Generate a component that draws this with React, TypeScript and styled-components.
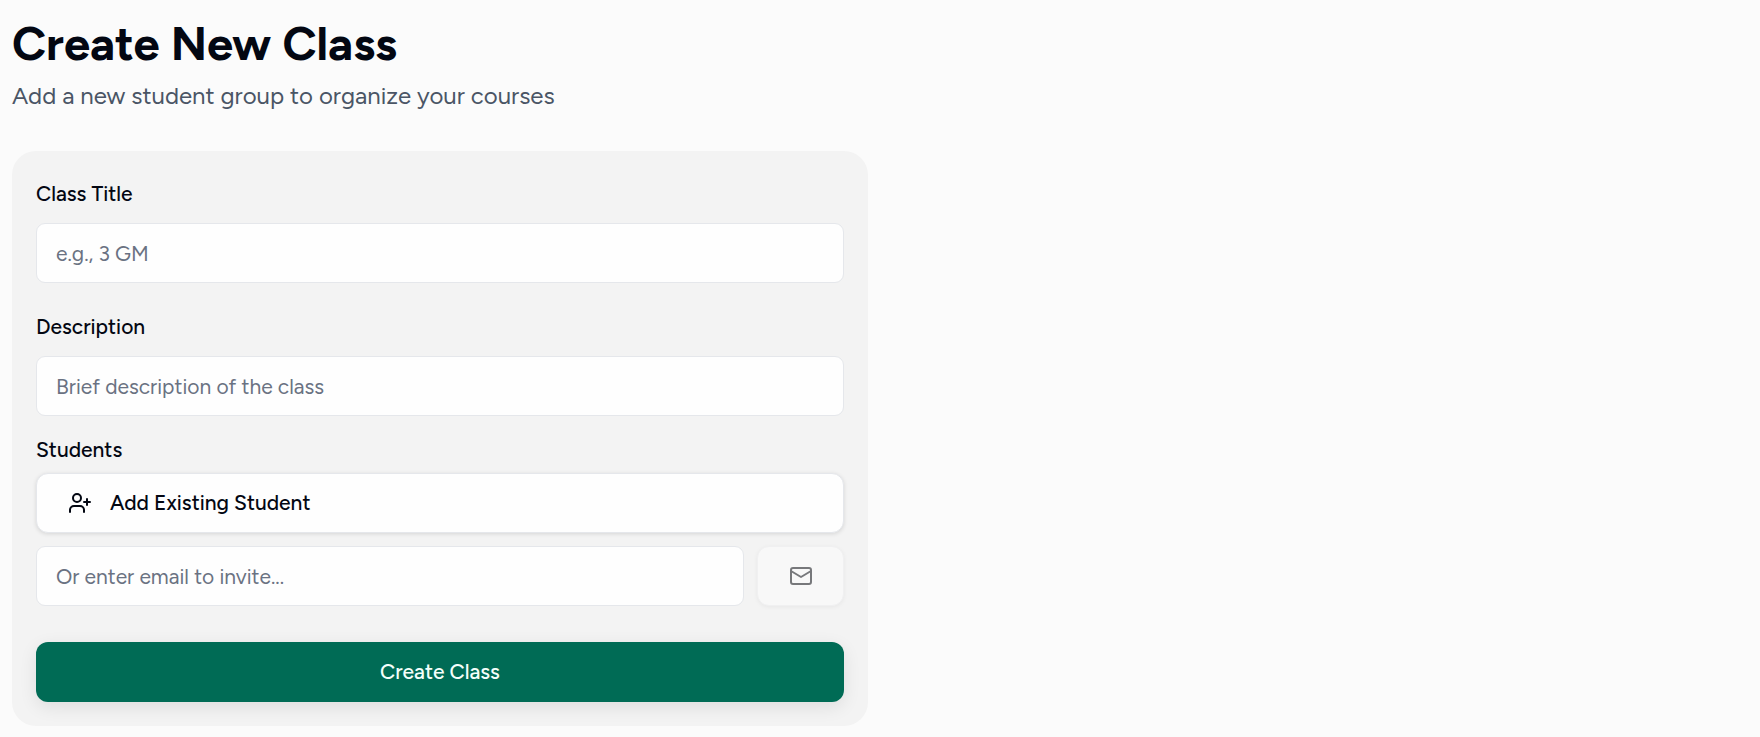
import React from "react";
import styled, { createGlobalStyle } from "styled-components";
import { UserPlus } from "lucide-react";

const GlobalStyle = createGlobalStyle`
  *, *::before, *::after {
    box-sizing: border-box;
  }
  body {
    margin: 0;
    background: #fbfbfb;
    color: #030712;
    font-family: Figtree, Lato, "Liberation Sans", sans-serif;
  }
  button, input {
    font: inherit;
    color: inherit;
  }
`;

const Page = styled.main`
  padding: 12px 12px 11px;
`;

const Title = styled.h1`
  margin: 0;
  font-size: 47px;
  font-weight: 700;
  line-height: 63px;
`;

const Subtitle = styled.p`
  margin: 0 0 35px;
  font-size: 24px;
  line-height: 41px;
  color: #4a5565;
`;

const Card = styled.form`
  max-width: 856px;
  padding: 24px;
  border-radius: 24px;
  background: #f3f3f3;
`;

const Field = styled.div`
  display: flex;
  flex-direction: column;
  gap: 10px;
  margin-bottom: 25px;
`;

const Label = styled.label`
  font-size: 21px;
  font-weight: 500;
  line-height: 38px;
`;

const Group = styled.fieldset`
  margin: -9px 0 36px;
  padding: 0;
  border: 0;
  min-width: 0;
`;

const Legend = styled.legend`
  padding: 0 0 5px;
  font-size: 21px;
  font-weight: 500;
  line-height: 36px;
`;

const TextInput = styled.input`
  width: 100%;
  min-width: 0;
  height: 60px;
  padding: 0 19px;
  border: 1px solid #e5e7eb;
  border-radius: 9px;
  background: #fefefe;
  font-size: 21px;
  &::placeholder {
    color: #6a7282;
    opacity: 1;
  }
`;

const Button = styled.button`
  display: flex;
  align-items: center;
  justify-content: center;
  height: 60px;
  border: 0;
  border-radius: 12px;
  font-size: 21px;
  font-weight: 500;
  cursor: pointer;
`;

const ButtonText = styled.span`
  padding-bottom: 2px;
`;

const AddButton = styled(Button)`
  justify-content: flex-start;
  gap: 18px;
  width: 100%;
  margin-bottom: 13px;
  padding: 0 31px;
  border: 1px solid #e5e7eb;
  background: #fefefe;
  box-shadow: 0 1px 4px rgba(0, 0, 0, 0.12);
`;

const InviteRow = styled.div`
  display: flex;
  gap: 13px;
`;

const InviteButton = styled(Button)`
  flex: 0 0 87px;
  border: 1px solid #f0f0f1;
  background: #f8f8f8;
  color: #77787b;
  box-shadow: 0 1px 4px rgba(0, 0, 0, 0.05);
`;

const SubmitButton = styled(Button)`
  width: 100%;
  background: #006b55;
  color: #f4fffb;
  box-shadow: 0 5px 18px rgba(0, 0, 0, 0.09);
`;

function MailIcon() {
  return (
    <svg
      width="24"
      height="24"
      viewBox="0 0 24 24"
      fill="none"
      stroke="currentColor"
      strokeWidth="2"
      strokeLinecap="round"
      strokeLinejoin="round"
      aria-hidden="true"
    >
      <rect x="2" y="4" width="20" height="16" rx="2" />
      <path d="m2 7 10 6 10-6" />
    </svg>
  );
}

export default function App() {
  return (
    <>
      <GlobalStyle />
      <Page>
        <Title>Create New Class</Title>
        <Subtitle>Add a new student group to organize your courses</Subtitle>
        <Card onSubmit={(event) => event.preventDefault()}>
          <Field>
            <Label htmlFor="class-title">Class Title</Label>
            <TextInput id="class-title" type="text" placeholder="e.g., 3 GM" />
          </Field>
          <Field>
            <Label htmlFor="class-description">Description</Label>
            <TextInput
              id="class-description"
              type="text"
              placeholder="Brief description of the class"
            />
          </Field>
          <Group>
            <Legend>Students</Legend>
            <AddButton type="button">
              <UserPlus size={24} aria-hidden="true" />
              <ButtonText>Add Existing Student</ButtonText>
            </AddButton>
            <InviteRow>
              <TextInput
                type="email"
                aria-label="Student email"
                placeholder="Or enter email to invite..."
              />
              <InviteButton type="button" aria-label="Send invite">
                <MailIcon />
              </InviteButton>
            </InviteRow>
          </Group>
          <SubmitButton type="submit">
            <ButtonText>Create Class</ButtonText>
          </SubmitButton>
        </Card>
      </Page>
    </>
  );
}
